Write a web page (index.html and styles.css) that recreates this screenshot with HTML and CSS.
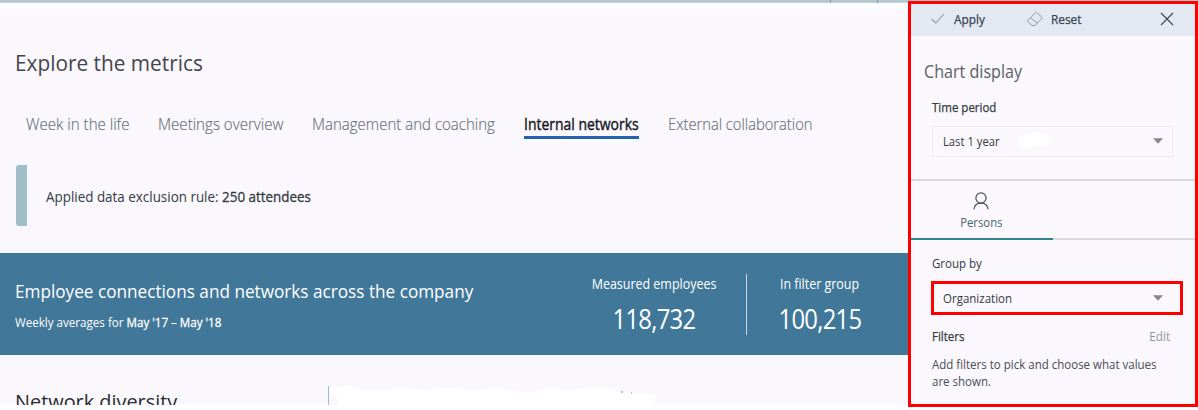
FILE: index.html
```html
<!DOCTYPE html>
<html lang="en">
<head>
<meta charset="utf-8">
<title>Explore the metrics</title>
<link rel="stylesheet" href="styles.css">
</head>
<body>
<div class="topbar"><i class="tick tick-a"></i><i class="tick tick-b"></i></div>
<div class="page">
  <main class="main">
    <h1 class="title"><span class="narrow">Explore the metrics</span></h1>
    <nav class="tabs">
      <a class="tab t1"><span class="narrow">Week in the life</span></a>
      <a class="tab t2"><span class="narrow">Meetings overview</span></a>
      <a class="tab t3"><span class="narrow">Management and coaching</span></a>
      <a class="tab t4 active"><span class="narrow">Internal networks</span></a>
      <a class="tab t5"><span class="narrow">External collaboration</span></a>
    </nav>
    <div class="rule"><span class="rule-bar"></span><span class="rule-text narrow">Applied data exclusion rule: <b>250 attendees</b></span></div>
    <section class="banner">
      <div class="banner-copy">
        <h2 class="banner-title"><span class="narrow">Employee connections and networks across the company</span></h2>
        <p class="banner-sub"><span class="narrow">Weekly averages for <b>May '17 – May '18</b></span></p>
      </div>
      <div class="stat stat-a"><span class="stat-label">Measured employees</span><span class="stat-value">118,732</span></div>
      <div class="divider"></div>
      <div class="stat stat-b"><span class="stat-label">In filter group</span><span class="stat-value">100,215</span></div>
    </section>
    <section class="diversity">
      <h2 class="diversity-title"><span class="narrow">Network diversity</span></h2>
      <div class="diversity-chart">
        <svg width="580" height="20" viewBox="0 0 580 20"><path d="M0 2 L20 0 L34 4 L60 4 L75 2 L95 4 L120 2 L140 4 L170 3 L200 7 L220 3 L240 4 L262 1 L285 2 L286 6 L325 8 L327 13 L321 20 H12 L8 12 L2 8Z" fill="#fff"/><path d="M292 6h2M302 7h1" stroke="#8a8f9b"/></svg>
      </div>
    </section>
  </main>
  <aside class="panel">
    <div class="toolbar">
      <svg class="icon-check" width="14" height="12" viewBox="0 0 14 12"><path d="M.5 6l4.300 4L13 1" fill="none" stroke="#929ca6" stroke-width="1.1"/></svg>
      <span class="tool apply"><span class="narrow">Apply</span></span>
      <svg class="icon-eraser" width="18" height="16" viewBox="0 0 18 16"><path d="M10.300 1L16.500 6.800 8.800 14.500H6L1.200 10ZM4.400 6.900L11.400 12" fill="none" stroke="#8f9aa5" stroke-width="1"/></svg>
      <span class="tool reset"><span class="narrow">Reset</span></span>
      <svg class="icon-close" width="14" height="14" viewBox="0 0 14 14"><path d="M1 1l12 12M13 1L1 13" stroke="#3c4650" stroke-width="1.1"/></svg>
    </div>
    <h2 class="panel-title"><span class="narrow">Chart display</span></h2>
    <div class="label time-label"><span class="narrow">Time period</span></div>
    <div class="select"><span class="last-year narrow">Last 1 year</span>
      <svg class="smudge" width="40" height="20" viewBox="0 0 40 20"><path d="M2 8L8 4 18 1 30 4 38 9 33 14 19 15 12 18 2 17Z" fill="#fff"/></svg>
      <svg class="caret" width="10" height="6" viewBox="0 0 10 6"><path d="M0 .3H10L5 5.700Z" fill="#858892"/></svg>
    </div>
    <div class="person-tabs">
      <div class="person-tab">
        <svg width="16" height="18" viewBox="0 0 16 18"><circle cx="8" cy="6" r="5.100"/><path d="M1 17.300C1.300 13.200 4 11.100 8 11.100S14.700 13.200 15 17.300"/></svg>
        <span class="persons">Persons</span>
      </div>
    </div>
    <div class="label group-label"><span class="narrow">Group by</span></div>
    <div class="select organization"><span class="narrow">Organization</span>
      <svg class="caret" width="10" height="6" viewBox="0 0 10 6"><path d="M0 .3H10L5 5.700Z" fill="#858892"/></svg>
    </div>
    <div class="filters"><span class="filters-label narrow">Filters</span><span class="edit">Edit</span></div>
    <p class="help"><span class="narrow">Add filters to pick and choose what values<br>are shown.</span></p>
  </aside>
</div>
</body>
</html>
```
FILE: styles.css
```css
* { box-sizing: border-box; }
body { margin: 0; width: 1198px; height: 410px; overflow: hidden; background: #fff; font-family: "Open Sans", "Noto Sans", sans-serif; color: #333a42; }
h1, h2, p { margin: 0; font-weight: 400; }
b { font-weight: 500; -webkit-text-stroke: .3px currentColor; }
/* Slightly condensed lettering, anchored at the left edge of each line */
.narrow { display: inline-block; transform: scaleX(var(--w, .925)); transform-origin: 0 50%; white-space: nowrap; }
.topbar { display: flex; height: 3px; background: #b5c6d0; border-bottom: 1px solid #c4d2da; }
.tick { width: 1px; height: 3px; background: #839aa5; }
.tick-a { margin-left: 830px; }
.tick-b { margin-left: 46px; }
.page { display: flex; align-items: flex-start; height: 407px; }
.main { width: 908px; height: 402px; overflow: hidden; background: linear-gradient(#fff, #faf8fc 9px); }
.title { margin: 44px 0 0 15px; height: 32px; line-height: 32px; font-size: 22.500px; color: #45444a; }
.tabs { display: flex; gap: 29px; margin: 33px 0 0 26px; height: 28px; }
.tab { font-size: 15.500px; line-height: 25px; height: 27px; color: #66717b; font-weight: 300; flex: none; -webkit-text-stroke: .15px currentColor; }
.t1 { width: 103px; --w: .975; }
.t2 { width: 125px; --w: .975; }
.t3 { width: 183px; --w: .97; }
.t4 { width: 115px; --w: .9; }
.t5 { width: 145px; --w: .95; }
.tab.active { color: #15171c; font-weight: 400; border-bottom: 3px solid #2563b0; -webkit-text-stroke: .4px currentColor; }
.rule { display: flex; align-items: center; margin: 25px 0 0 16px; height: 62px; }
.rule-bar { align-self: flex-start; width: 11px; height: 61px; background: #a1bfc8; border-radius: 3px 0 0 3px; }
.rule-text { margin-left: 19px; font-size: 14.500px; }
.banner { display: flex; margin-top: 26px; height: 102px; background: #417899; color: #fff; white-space: nowrap; }
.banner-copy { width: 577px; padding: 24px 0 0 15px; flex: none; --w: .928; }
.banner-title { font-size: 18.500px; line-height: 28px; }
.banner-sub { margin-top: 8px; font-size: 12.500px; line-height: 20px; }
.stat { display: flex; flex-direction: column; align-items: center; padding-top: 20px; flex: none; }
.stat-a { width: 154px; }
.stat-b { width: 146px; }
.stat-label { font-size: 14px; line-height: 22px; transform: scaleX(.89); }
.stat-value { font-size: 27.500px; line-height: 36px; margin-top: 6px; letter-spacing: -.8px; transform: scaleX(.865); }
.divider { width: 1px; height: 61px; margin: 21px 0 0 15px; background: #c5dde7; }
.diversity { display: flex; height: 51px; padding-left: 15px; }
.diversity-title { width: 313px; flex: none; padding-top: 31px; font-size: 20.500px; line-height: 30px; color: #282d33; --w: .97; }
.diversity-chart { margin-top: 31px; height: 20px; border-left: 1px solid #a5bbc3; }
.panel { width: 290px; height: 406px; margin-top: -2px; border: 3px solid red; background: #faf8fc; font-size: 13px; --w: .885; }
.toolbar { display: flex; align-items: center; height: 32px; padding: 0 0 2px 20px; background: #e3e8f3; color: #36424d; --w: .91; }
.tool { line-height: 20px; -webkit-text-stroke: .25px currentColor; }
.apply { width: 62px; margin-left: 9px; }
.icon-eraser { margin-left: 10px; }
.reset { width: 109px; margin-left: 7px; }
.icon-close { flex: none; }
.panel-title { margin: 20px 0 0 13px; font-size: 17.500px; line-height: 30px; color: #5c6066; --w: .92; }
.label { margin-left: 21px; height: 20px; line-height: 20px; }
.time-label { margin-top: 11px; -webkit-text-stroke: .25px currentColor; }
.select { display: flex; align-items: center; width: 241px; height: 31px; margin: 9px 0 0 21px; padding: 0 9px 1px 10px; border: 1px solid #eeecf2; }
.last-year { width: 73px; --w: .865; }
.caret { margin-left: auto; }
.person-tabs { margin-top: 22px; height: 61px; border-top: 2px solid #dad9df; border-bottom: 2px solid #dad9df; }
.person-tab { display: flex; flex-direction: column; align-items: center; width: 142px; height: 59px; padding: 11px 2px 0 0; border-bottom: 2px solid #31858f; }
.person-tab svg { fill: none; stroke: #4a5159; stroke-width: 1.200; }
.persons { margin-top: 2px; line-height: 20px; color: #466570; transform: scaleX(.87); }
.group-label { margin-top: 13px; }
.organization { width: 252px; height: 34px; margin: 8px 0 0 20px; padding: 0 17px 1px 9px; border: 3px solid red; }
.filters { display: flex; justify-content: space-between; margin: 11px 25px 0 21px; line-height: 20px; }
.filters-label { -webkit-text-stroke: .25px currentColor; }
.edit { color: #92979f; transform: scaleX(.9); transform-origin: 100% 50%; }
.help { margin: 10px 0 0 21px; line-height: 17px; color: #484d55; }
```
